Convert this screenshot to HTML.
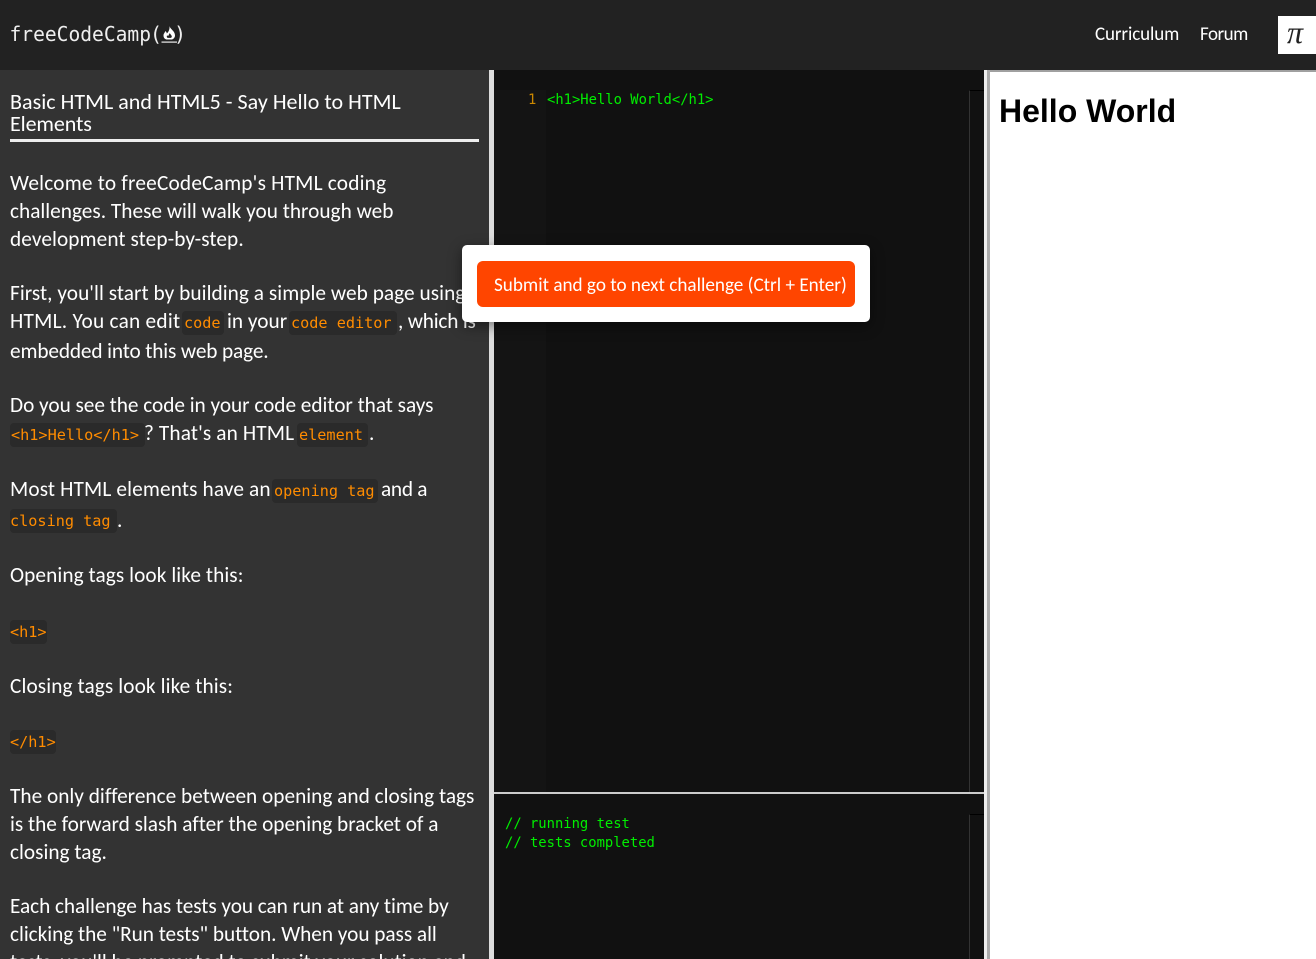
<!DOCTYPE html>
<html><head><meta charset="utf-8"><title>freeCodeCamp</title>
<style>
html,body{margin:0;padding:0;width:1316px;height:959px;overflow:hidden;background:#333}
#w{position:absolute;left:0;top:0;width:1316px;height:959px;overflow:hidden}
.b{position:absolute}
.c{position:absolute;background:#2a2a2a;border-radius:4px}
svg{position:absolute;left:0;top:0}
.t,.m,.g,.p{position:absolute;white-space:pre;line-height:28px;margin:0}
.t{font-family:"Carlito","Lato","Liberation Sans",sans-serif;font-size:21.3px;font-variant-ligatures:none;color:#fff;top:calc(var(--b)*1px - 21px)}
.h{font-size:22px}
.m{font-family:"DejaVu Sans Mono","Liberation Mono",monospace;font-size:15.2px;color:#ff8c00;top:calc(var(--b)*1px - 19px)}
.g{font-family:"DejaVu Sans Mono","Liberation Mono",monospace;font-size:13.84px;color:#0e0;top:calc(var(--b)*1px - 18px)}
.n{font-size:19px}
</style></head><body><div id="w">
<div class="b" style="left:0;top:0;width:1316px;height:70px;background:#222"></div>
<div class="b" style="left:0;top:70px;width:489px;height:889px;background:#333"></div>
<div class="b" style="left:489px;top:70px;width:5px;height:889px;background:#ddd"></div>
<div class="b" style="left:494px;top:70px;width:490px;height:889px;background:#111"></div>
<div class="b" style="left:494px;top:90px;width:52px;height:702px;background:#141414"></div>
<div class="b" style="left:969px;top:90px;width:15px;height:702px;border-left:1px solid #333;border-top:1px solid #000;box-sizing:border-box"></div>
<div class="b" style="left:494px;top:792px;width:490px;height:2px;background:#ccc"></div>
<div class="b" style="left:969px;top:814px;width:15px;height:145px;border-left:1px solid #333;border-top:1px solid #000;box-sizing:border-box"></div>
<div class="b" style="left:984px;top:70px;width:3px;height:889px;background:#eee"></div>
<div class="b" style="left:987px;top:70px;width:3px;height:889px;background:#aaa"></div>
<div class="b" style="left:990px;top:70px;width:326px;height:889px;background:#fff"></div>
<div class="b" style="left:990px;top:70px;width:326px;height:2px;background:#a0a0a0"></div>
<div class="b" style="left:10px;top:139px;width:469px;height:3px;background:#eee"></div>
<div class="c" style="left:182px;top:311px;width:42px;height:24px"></div>
<div class="c" style="left:289px;top:311px;width:108px;height:24px"></div>
<div class="c" style="left:10px;top:423px;width:135px;height:24px"></div>
<div class="c" style="left:297px;top:423px;width:71px;height:24px"></div>
<div class="c" style="left:272px;top:479px;width:106px;height:24px"></div>
<div class="c" style="left:10px;top:509px;width:107px;height:24px"></div>
<div class="c" style="left:10px;top:620px;width:37px;height:24px"></div>
<div class="c" style="left:10px;top:730px;width:46px;height:24px"></div>
<div class="b" style="left:1278px;top:16px;width:38px;height:38px;background:#fff"></div>

<svg width="200" height="70" viewBox="0 0 200 70">
<text x="9.500" y="41" textLength="141.500" lengthAdjust="spacingAndGlyphs" style="font-family:'DejaVu Sans Mono',monospace;font-size:20px;fill:#eee">freeCodeCamp</text>
<text x="150" y="41" style="font-family:'DejaVu Sans Mono',monospace;font-size:20px;fill:#eee">(</text>
<text x="174" y="41" style="font-family:'DejaVu Sans Mono',monospace;font-size:20px;fill:#eee">)</text>
<path fill-rule="evenodd" d="M169.500 26C170 29 175 31 175 35.500C175 37.500 173.500 39 172 39.500L166.500 39.500C164.500 39 163.500 37.500 163.500 35.500C163.500 33.500 165 32.500 165.500 31C166.500 32 166.800 33 166.800 33.500C168.500 32 169.800 29.500 169.500 26ZM169.800 33C170.300 34.500 171.800 35.200 171.800 36.600C171.800 37.200 171.300 37.700 170.800 37.900L167.800 37.900C167.200 37.700 166.800 37.200 166.800 36.600C166.800 36 167 35.600 167.300 35.300C167.600 35.800 167.900 36.100 168.300 36.100C168.300 35 169.300 34.200 169.800 33Z" fill="#fff"/>
<rect x="161.500" y="41.500" width="15.500" height="1.200" fill="#eee"/>
</svg>
<div class="t n" style="left:1095px;--b:42;letter-spacing:-.1px">Curriculum</div>
<div class="t n" style="left:1200px;--b:42;letter-spacing:-.5px">Forum</div>
<div class="p" style="left:1287px;top:14px;font-family:'Liberation Serif',serif;font-style:italic;font-size:32px;line-height:36px;color:#222">π</div>

<div class="t h" style="left:10px;--b:109;letter-spacing:.03px">Basic HTML and HTML5 - Say Hello to HTML</div>
<div class="t h" style="left:10px;--b:131;letter-spacing:-.1px">Elements</div>
<div class="t" style="left:10px;--b:190;letter-spacing:.2px">Welcome to freeCodeCamp's HTML coding</div>
<div class="t" style="left:10px;--b:218">challenges. These will walk you through web</div>
<div class="t" style="left:10px;--b:246;letter-spacing:.08px">development step-by-step.</div>
<div class="t" style="left:10px;--b:300;letter-spacing:.04px">First, you'll start by building a simple web page using</div>
<div class="t" style="left:10px;--b:328;letter-spacing:.25px">HTML. You can edit</div>
<div class="t" style="left:227px;--b:328">in your</div>
<div class="t" style="left:398px;--b:328;letter-spacing:-.2px">, which is</div>
<div class="t" style="left:10px;--b:358;letter-spacing:-.14px">embedded into this web page.</div>
<div class="t" style="left:10px;--b:412;letter-spacing:-.04px">Do you see the code in your code editor that says</div>
<div class="t" style="left:144px;--b:440;letter-spacing:.12px">? That's an HTML</div>
<div class="t" style="left:369px;--b:440">.</div>
<div class="t" style="left:10px;--b:496;letter-spacing:.13px">Most HTML elements have an</div>
<div class="t" style="left:381px;--b:496;letter-spacing:-.28px">and a</div>
<div class="t" style="left:117px;--b:527">.</div>
<div class="t" style="left:10px;--b:582;letter-spacing:.07px">Opening tags look like this:</div>
<div class="t" style="left:10px;--b:693;letter-spacing:.1px">Closing tags look like this:</div>
<div class="t" style="left:10px;--b:803">The only difference between opening and closing tags</div>
<div class="t" style="left:10px;--b:831;letter-spacing:-.02px">is the forward slash after the opening bracket of a</div>
<div class="t" style="left:10px;--b:859">closing tag.</div>
<div class="t" style="left:10px;--b:913;letter-spacing:-.06px">Each challenge has tests you can run at any time by</div>
<div class="t" style="left:10px;--b:941;letter-spacing:-.04px">clicking the "Run tests" button. When you pass all</div>
<div class="t" style="left:10px;--b:969;letter-spacing:-.06px">tests, you'll be prompted to submit your solution and</div>

<div class="m" style="left:184px;--b:328">code</div>
<div class="m" style="left:291px;--b:328">code editor</div>
<div class="m" style="left:11px;--b:440">&lt;h1&gt;Hello&lt;/h1&gt;</div>
<div class="m" style="left:299px;--b:440">element</div>
<div class="m" style="left:274px;--b:496">opening tag</div>
<div class="m" style="left:10px;--b:526">closing tag</div>
<div class="m" style="left:10px;--b:637">&lt;h1&gt;</div>
<div class="m" style="left:10px;--b:747">&lt;/h1&gt;</div>
<div class="g" style="left:528px;--b:104;color:#c80">1</div>
<div class="g" style="left:547px;--b:104">&lt;h1&gt;Hello World&lt;/h1&gt;</div>
<div class="g" style="left:505px;--b:828">// running test</div>
<div class="g" style="left:505px;--b:847">// tests completed</div>
<div class="p" style="left:999px;top:93px;line-height:37px;font-family:'Liberation Sans',sans-serif;font-weight:bold;font-size:32px;color:#000">Hello World</div>

<div class="b" style="left:462px;top:245px;width:408px;height:77px;background:#fff;border-radius:5px;box-shadow:0 4px 14px rgba(0,0,0,.45)"></div>
<div class="b" style="left:477px;top:261px;width:378px;height:46px;background:#ff4500;border-radius:6px"></div>
<div class="t n" style="left:494px;--b:293;font-size:19.15px">Submit and go to next challenge (Ctrl + Enter)</div>
</div></body></html>
